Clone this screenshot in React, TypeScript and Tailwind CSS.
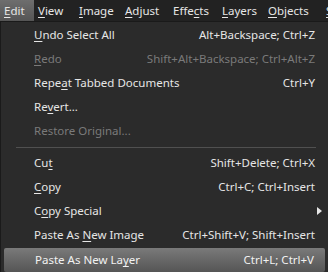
import React from "react";

const font = { fontFamily: '"Noto Sans", "Open Sans", sans-serif' };

// label with underlined accelerator at index `u`
function Acc({ text, u }: { text: string; u: number }) {
  if (u < 0) return <>{text}</>;
  return (
    <>
      {text.slice(0, u)}
      <span className="underline underline-offset-2">{text[u]}</span>
      {text.slice(u + 1)}
    </>
  );
}

const menus = [
  { t: "Edit", u: 0, w: "w-[34px]" },
  { t: "View", u: 0, w: "w-[41px]" },
  { t: "Image", u: 0, w: "w-[46px]" },
  { t: "Adjust", u: 0, w: "w-[48px]" },
  { t: "Effects", u: 4, w: "w-[49px]" },
  { t: "Layers", u: 0, w: "w-[46px]" },
  { t: "Objects", u: 0, w: "w-[58px]" },
  { t: "Select", u: 0, w: "w-[50px]" },
];

type Item =
  | { sep: true }
  | { sep?: false; t: string; u: number; k?: string; off?: boolean; sub?: boolean; hl?: boolean };

const items: Item[] = [
  { t: "Undo Select All", u: 0, k: "Alt+Backspace; Ctrl+Z" },
  { t: "Redo", u: 0, k: "Shift+Alt+Backspace; Ctrl+Alt+Z", off: true },
  { t: "Repeat  Tabbed Documents", u: 4, k: "Ctrl+Y" },
  { t: "Revert...", u: 2 },
  { t: "Restore Original...", u: -1, off: true },
  { sep: true },
  { t: "Cut", u: 2, k: "Shift+Delete; Ctrl+X" },
  { t: "Copy", u: 0, k: "Ctrl+C; Ctrl+Insert" },
  { t: "Copy Special", u: 1, sub: true },
  { t: "Paste As New Image", u: 9, k: "Ctrl+Shift+V; Shift+Insert" },
  { t: "Paste As New Layer", u: 15, k: "Ctrl+L; Ctrl+V", hl: true },
];

export default function App() {
  return (
    <div className="w-[328px] h-[272px] overflow-hidden bg-[#2b2b2b] text-[11.5px]" style={font}>
      <div className="flex h-[21px] bg-[#222222] text-[#e6e6e6] whitespace-nowrap">
        {menus.map((m, i) => (
          <div
            key={m.t}
            className={
              "flex shrink-0 items-center pl-[4px] " +
              m.w +
              (i === 0 ? " bg-gradient-to-b from-[#6e6e6e] to-[#555555]" : "")
            }
          >
            <Acc text={m.t} u={m.u} />
          </div>
        ))}
      </div>
      <div className="h-[251px] border-t border-l border-[#1a1a1a] pt-[1px] pl-[2px] pr-[2px]">
        {items.map((it, i) =>
          it.sep ? (
            <div key={i} className="h-[8px] flex items-center pl-[13px] pr-[10px]">
              <div className="h-px w-full bg-[#505050]" />
            </div>
          ) : (
            <div
              key={i}
              className={
                "relative flex items-center h-[24px] pl-[31px] pr-[11px] whitespace-nowrap " +
                (it.hl
                  ? "mx-[1px] h-[23px] mt-[1px] rounded-[2px] bg-gradient-to-b from-[#7a7a7a] to-[#555555] text-[#f2f2f2] "
                  : "") +
                (it.off ? "text-[#7a7a7a]" : "text-[#e6e6e6]")
              }
            >
              <span className="flex-1">
                <Acc text={it.t} u={it.u} />
              </span>
              {it.k && <span>{it.k}</span>}
              {it.sub && (
                <span className="absolute right-[4px] top-[8px] w-0 h-0 border-y-[4px] border-y-transparent border-l-[5px] border-l-[#e6e6e6]" />
              )}
            </div>
          )
        )}
      </div>
    </div>
  );
}
